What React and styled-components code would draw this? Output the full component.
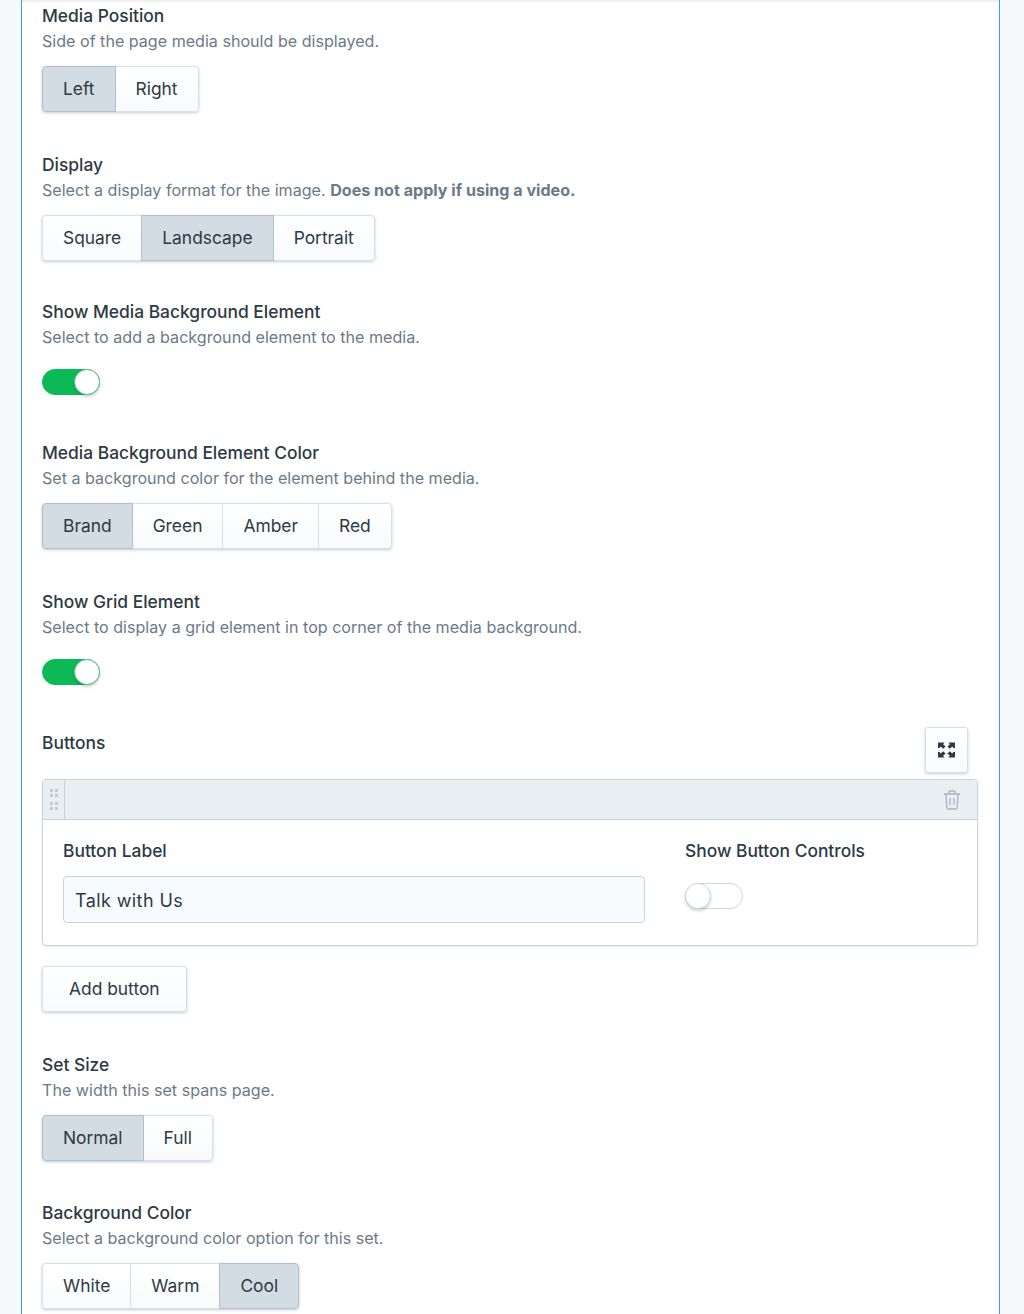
import React from 'react';
import styled, { createGlobalStyle } from 'styled-components';

const GlobalStyle = createGlobalStyle`
  html, body {
    margin: 0;
    padding: 0;
    background: #f7fafc;
    font-family: Inter, "Liberation Sans", sans-serif;
    color: #2d3a44;
  }
  body { height: 1314px; overflow: hidden; }
`;

const Page = styled.div`
  height: 1314px;
  overflow: hidden;
  padding: 0 24px 0 21px;
`;

const Panel = styled.div`
  height: 1314px;
  box-sizing: border-box;
  background: #fff;
  border-left: 1px solid #3a9cf0;
  border-right: 1px solid #3a9cf0;
  padding: 5px 21px 0 20px;
  box-shadow: inset 0 4px 3px -3px rgba(60, 80, 100, 0.16);
`;

const Field = styled.div`
  margin-bottom: ${({ $gap }) => $gap}px;
`;

const Label = styled.div`
  font-size: 17.4px;
  line-height: 22px;
  font-weight: 500;
  color: #2d3a44;
`;

const Desc = styled.div`
  font-size: 16.1px;
  line-height: 22px;
  margin-top: 3px;
  color: #6b7a88;
  b { font-weight: 700; }
`;

const Group = styled.div`
  display: inline-flex;
  margin-top: 14px;
  height: 46px;
  border-radius: 4px;
  box-shadow: 0 1px 3px rgba(60, 80, 100, 0.3);
  vertical-align: top;
`;

const Segment = styled.div`
  display: flex;
  align-items: center;
  padding: 0 20px 2px;
  font-size: 17.4px;
  color: #2d3a44;
  box-sizing: border-box;
  background: ${({ $active }) => ($active ? '#d3dbe3' : 'linear-gradient(#fff, #f8fafc)')};
  border: 1px solid ${({ $active }) => ($active ? '#b3bfca' : '#d6e0e9')};
  margin-left: -1px;
  position: relative;
  z-index: ${({ $active }) => ($active ? 1 : 0)};
  &:first-child { margin-left: 0; border-radius: 4px 0 0 4px; }
  &:last-child { border-radius: 0 4px 4px 0; }
`;

const Track = styled.div`
  position: relative;
  width: 58px;
  height: 26px;
  margin-top: ${({ $top }) => $top}px;
  border-radius: 14px;
  box-sizing: border-box;
  background: ${({ $on }) => ($on ? '#0bb956' : '#fff')};
  border: 1px solid ${({ $on }) => ($on ? '#0bb956' : '#cfd6dd')};
`;

const Knob = styled.div`
  position: absolute;
  top: -1px;
  ${({ $on }) => ($on ? 'right: -1px;' : 'left: -1px;')}
  width: 26px;
  height: 26px;
  box-sizing: border-box;
  border-radius: 50%;
  background: #fff;
  border: 1px solid ${({ $on }) => ($on ? '#5fc48b' : '#cfd6dd')};
  box-shadow: 0 2px 3px rgba(40, 50, 60, 0.22);
`;

const ButtonsHead = styled.div`
  display: flex;
  justify-content: space-between;
  align-items: flex-start;
  padding-right: 10px;
  margin-bottom: 6px;
`;

const HeadLabel = styled(Label)`
  margin-top: 5px;
`;

const IconButton = styled.div`
  width: 43px;
  height: 46px;
  box-sizing: border-box;
  display: flex;
  align-items: center;
  justify-content: center;
  border: 1px solid #d6e0e9;
  border-radius: 3px;
  background: linear-gradient(#fff, #f8fafc);
  box-shadow: 0 1px 3px rgba(60, 80, 100, 0.3);
  color: #2d3a44;
`;

const Repeater = styled.div`
  border: 1px solid #c9d2da;
  border-radius: 4px;
  overflow: hidden;
  box-shadow: 0 1px 2px rgba(60, 80, 100, 0.12);
`;

const RepeaterBar = styled.div`
  display: flex;
  align-items: center;
  justify-content: space-between;
  height: 39px;
  background: #e9eef2;
  border-bottom: 1px solid #c9d2da;
`;

const DragHandle = styled.div`
  width: 21px;
  height: 100%;
  display: flex;
  align-items: center;
  justify-content: center;
  border-right: 1px solid #c9d2da;
  color: #c2cad1;
`;

const TrashSlot = styled.div`
  display: flex;
  padding-right: 16px;
  color: #a9b4be;
`;

const RepeaterBody = styled.div`
  display: flex;
  padding: 20px 20px 22px 20px;
  gap: 40px;
`;

const InputCol = styled.div`
  width: 582px;
`;

const TextBox = styled.div`
  margin-top: 14px;
  height: 47px;
  box-sizing: border-box;
  display: flex;
  align-items: center;
  padding: 1px 11px 0;
  font-size: 18px;
  letter-spacing: 0.4px;
  color: #2d3a44;
  background: #f8fbfe;
  border: 1px solid #c9d2da;
  border-radius: 4px;
`;

const AddButton = styled.div`
  display: inline-flex;
  align-items: center;
  margin-top: 20px;
  height: 46px;
  padding: 0 26px 2px;
  box-sizing: border-box;
  font-size: 17.4px;
  color: #2d3a44;
  border: 1px solid #d6e0e9;
  border-radius: 4px;
  background: linear-gradient(#fff, #f8fafc);
  box-shadow: 0 1px 3px rgba(60, 80, 100, 0.3);
`;

const Options = ({ items, active }) => (
  <Group>
    {items.map((item) => (
      <Segment key={item} $active={item === active}>{item}</Segment>
    ))}
  </Group>
);

const Toggle = ({ on, top }) => (
  <Track $on={on} $top={top}>
    <Knob $on={on} />
  </Track>
);

const ExpandIcon = () => (
  <svg width="17" height="16" viewBox="0 0 18 16" fill="currentColor">
    <path d="M0 0h7L5.4 1.8 8 4.2 5.4 6.8 3 4.2 1.6 6H0z" />
    <path d="M18 0v6h-1.6L15 4.2 12.6 6.8 10 4.2l2.6-2.4L11 0z" />
    <path d="M0 16v-6h1.6L3 11.8l2.4-2.6L8 11.8l-2.6 2.4L7 16z" />
    <path d="M18 16h-7l1.6-1.8L10 11.8l2.6-2.6 2.4 2.6 1.4-1.8H18z" />
  </svg>
);

const TrashIcon = () => (
  <svg width="18" height="20" viewBox="0 0 18 20" fill="none" stroke="currentColor" strokeWidth="1.3">
    <path d="M1 4h16M6 4V2a1 1 0 0 1 1-1h4a1 1 0 0 1 1 1v2" />
    <path d="M3 4l.8 13.5A1.5 1.5 0 0 0 5.3 19h7.4a1.5 1.5 0 0 0 1.5-1.5L15 4" />
    <path d="M7 8v7M11 8v7" />
  </svg>
);

const GripIcon = () => (
  <svg width="8" height="21" viewBox="0 0 8 21" fill="currentColor">
    {[0, 5, 13, 18].map((y) => (
      <g key={y}>
        <rect x="0" y={y} width="3" height="3" rx="0.5" />
        <rect x="5" y={y} width="3" height="3" rx="0.5" />
      </g>
    ))}
  </svg>
);

const App = () => (
  <>
    <GlobalStyle />
    <Page>
      <Panel>
        <Field $gap={42}>
          <Label>Media Position</Label>
          <Desc>Side of the page media should be displayed.</Desc>
          <Options items={['Left', 'Right']} active="Left" />
        </Field>
        <Field $gap={40}>
          <Label>Display</Label>
          <Desc>Select a display format for the image. <b>Does not apply if using a video.</b></Desc>
          <Options items={['Square', 'Landscape', 'Portrait']} active="Landscape" />
        </Field>
        <Field $gap={47}>
          <Label>Show Media Background Element</Label>
          <Desc>Select to add a background element to the media.</Desc>
          <Toggle on top={21} />
        </Field>
        <Field $gap={42}>
          <Label>Media Background Element Color</Label>
          <Desc>Set a background color for the element behind the media.</Desc>
          <Options items={['Brand', 'Green', 'Amber', 'Red']} active="Brand" />
        </Field>
        <Field $gap={42}>
          <Label>Show Grid Element</Label>
          <Desc>Select to display a grid element in top corner of the media background.</Desc>
          <Toggle on top={21} />
        </Field>
        <Field $gap={42}>
          <ButtonsHead>
            <HeadLabel>Buttons</HeadLabel>
            <IconButton><ExpandIcon /></IconButton>
          </ButtonsHead>
          <Repeater>
            <RepeaterBar>
              <DragHandle><GripIcon /></DragHandle>
              <TrashSlot><TrashIcon /></TrashSlot>
            </RepeaterBar>
            <RepeaterBody>
              <InputCol>
                <Label>Button Label</Label>
                <TextBox>Talk with Us</TextBox>
              </InputCol>
              <div>
                <Label>Show Button Controls</Label>
                <Toggle top={21} />
              </div>
            </RepeaterBody>
          </Repeater>
          <AddButton>Add button</AddButton>
        </Field>
        <Field $gap={41}>
          <Label>Set Size</Label>
          <Desc>The width this set spans page.</Desc>
          <Options items={['Normal', 'Full']} active="Normal" />
        </Field>
        <Field $gap={0}>
          <Label>Background Color</Label>
          <Desc>Select a background color option for this set.</Desc>
          <Options items={['White', 'Warm', 'Cool']} active="Cool" />
        </Field>
      </Panel>
    </Page>
  </>
);

export default App;
